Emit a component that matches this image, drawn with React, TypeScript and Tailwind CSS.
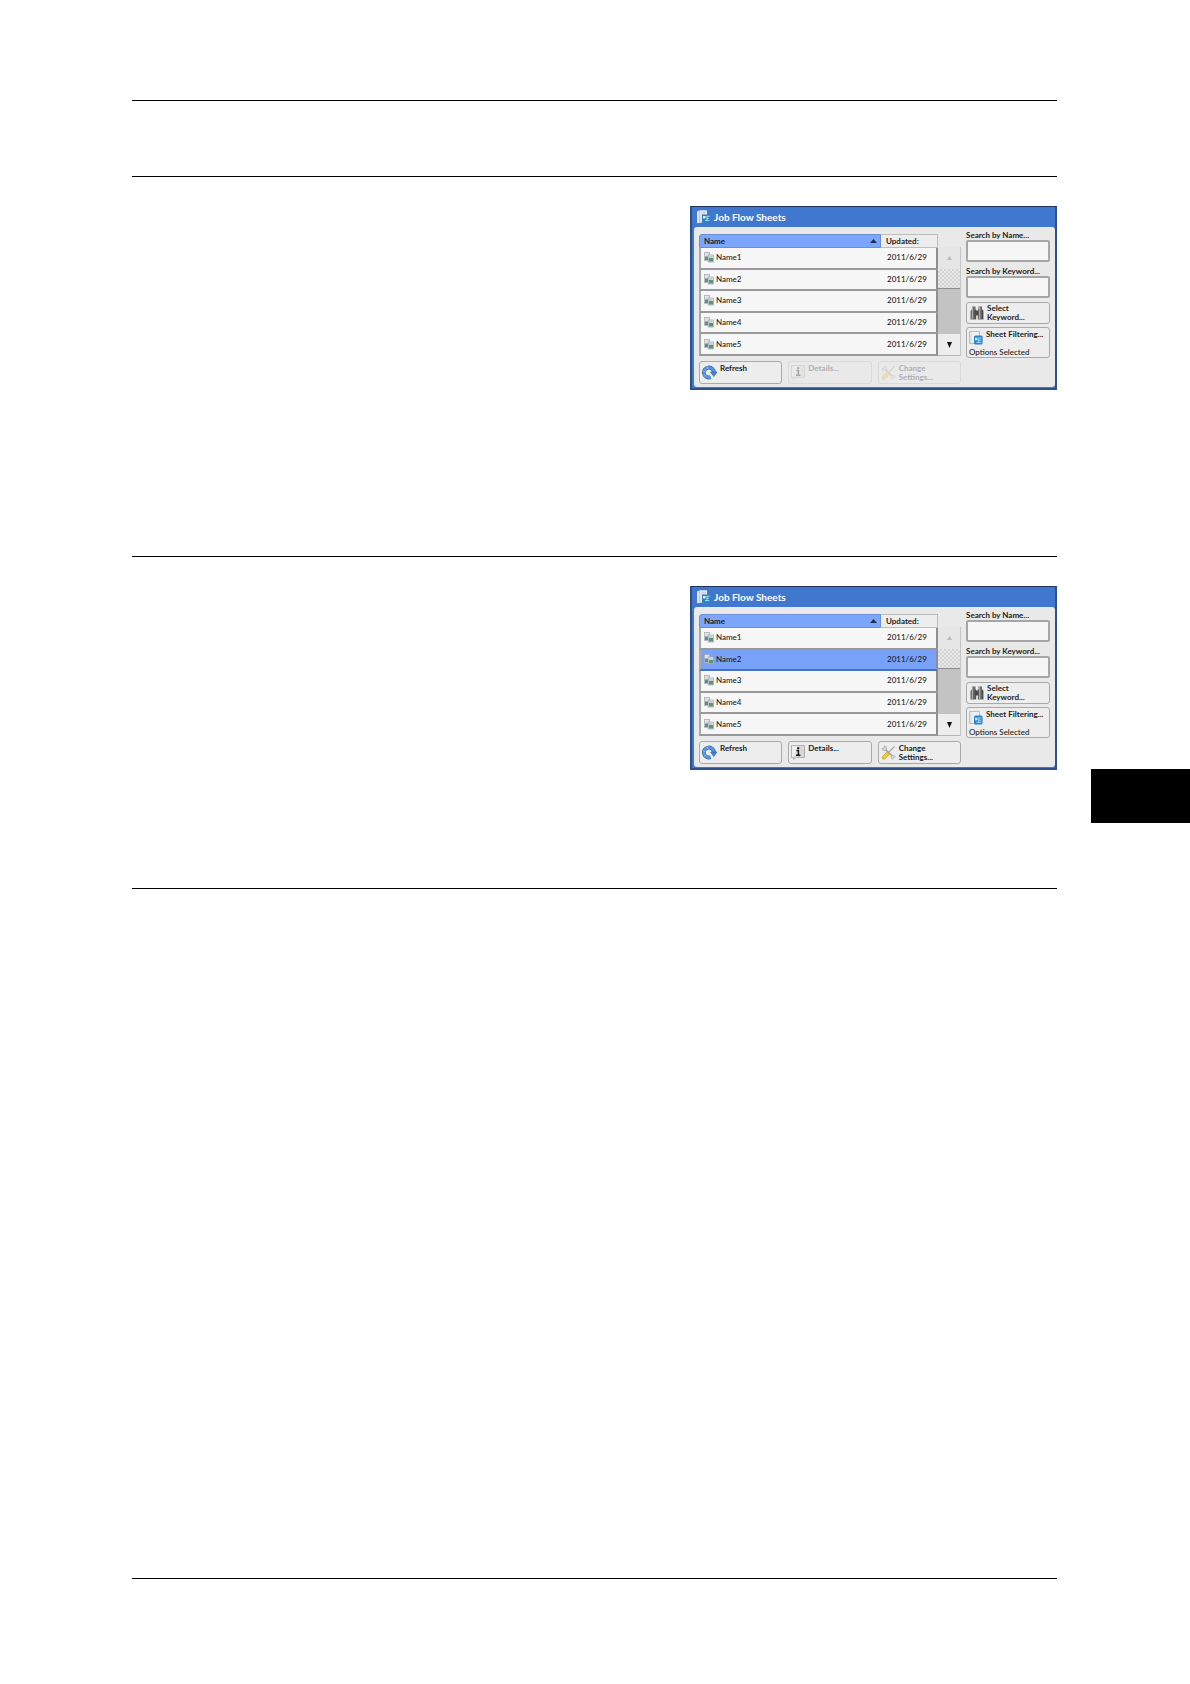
import React from 'react';
import clsx from 'clsx';

const NAMES = ['Name1', 'Name2', 'Name3', 'Name4', 'Name5'];

const TitleIcon = () => (
  <svg width="14" height="14" viewBox="0 0 14 14" aria-hidden="true">
    <path d="M0 1.5 3 0.3H10V12L0 13.2Z" fill="#e1e5ec" />
    <path d="M2.6 1V12.5" stroke="#b3bccb" strokeWidth="0.8" />
    <path d="M4.5 2.5H9M4.5 4.2H8" stroke="#c2cad8" strokeWidth="0.7" />
    <path d="M5 4.5H13.5V11.5L12 12.8H5Z" fill="#2381c4" />
    <path d="M6 6H8.6V8.4H6Z" fill="#e8f7ff" />
    <path d="M9.8 6.2H12.8M9.8 8.4H12M8 10.6H12.4M10 6V11" stroke="#c2e8fb" strokeWidth="0.8" />
  </svg>
);

const FlowIcon = () => (
  <svg className="block" width="10" height="11" viewBox="0 0 10 11" aria-hidden="true">
    <rect x="0.5" y="0.5" width="5" height="8" fill="#dfe2e4" stroke="#a5a9ad" strokeWidth="0.7" />
    <rect x="1" y="4.5" width="3.2" height="3.5" fill="#5c8f80" />
    <rect x="4.2" y="3" width="5.3" height="7" fill="#e9ebed" stroke="#999ea2" strokeWidth="0.7" />
    <rect x="5" y="6" width="4" height="3.5" fill="#5b9479" />
    <path d="M5 5H8.5" stroke="#87a6bb" strokeWidth="0.8" />
  </svg>
);

const RefreshIcon = () => (
  <svg width="15" height="15" viewBox="0 0 15 15" aria-hidden="true">
    <path d="M8.6 12.2A5 5 0 1 1 11.9 7.4" fill="none" stroke="#2c62a8" strokeWidth="3.8" />
    <path d="M8.4 12.2A5 5 0 1 1 11.9 7.4" fill="none" stroke="#5a97dc" strokeWidth="2.6" />
    <path d="M8.6 7H15L11.8 11.6Z" fill="#4482cc" stroke="#2c62a8" strokeWidth="0.6" />
    <path d="M2.4 11.8 4.4 9.4M0.8 5.8 3.6 6.8M5 1.4 5.8 4" stroke="#b4d4f5" strokeWidth="0.6" />
  </svg>
);

const InfoIcon = () => (
  <svg width="14" height="15" viewBox="0 0 14 15" aria-hidden="true">
    <path d="M0.5 0.5H13.5V12.5H5L2.6 14.4V12.5H0.5Z" fill="#d7d7d7" stroke="#a3a3a3" strokeWidth="0.8" />
    <path d="M1 1H8L3 12H1Z" fill="#efefef" />
    <path d="M5.4 5.5H7.4V10M5 10.3H9.4" fill="none" stroke="#111" strokeWidth="1.4" />
    <rect x="6.2" y="2.2" width="2" height="1.8" fill="#111" />
  </svg>
);

const ToolsIcon = () => (
  <svg width="15" height="15" viewBox="0 0 15 15" aria-hidden="true">
    <path d="M3.5 3.5 12.5 12.5" stroke="#a2a4a8" strokeWidth="1.6" />
    <path d="M3.6 0.8A2.4 2.4 0 1 1 0.8 3.4L2.8 3.6Z" fill="#d8dadd" stroke="#a2a4a8" strokeWidth="0.7" />
    <path d="M11.6 14.2A2 2 0 1 1 14.2 11.8L12.8 12.4Z" fill="#d8dadd" stroke="#a2a4a8" strokeWidth="0.7" />
    <path d="M7 8 13.6 1.4" stroke="#a2a4a8" strokeWidth="1.1" />
    <path d="M1 12 6 6.8 8.6 9.2 3.6 14.2Q1.2 14.8 1 12Z" fill="#f3c92d" stroke="#bd981f" strokeWidth="0.6" />
  </svg>
);

const BinocularsIcon = () => (
  <svg width="14" height="14" viewBox="0 0 14 14" aria-hidden="true">
    <path d="M2 0.5H5.5V3L6.2 4V13.5H0.5V5L2 3ZM8.5 0.5H12V3L13.5 5V13.5H7.8V4L8.5 3Z" fill="#6b6b6b" />
    <path d="M5.5 4.5H8.5V9.5H5.5Z" fill="#4a4a4a" />
    <path d="M2.4 1V13M9.6 1V13" stroke="#adadad" strokeWidth="1.1" />
    <path d="M5 4V13M12.4 4V13" stroke="#3f3f3f" strokeWidth="0.9" />
  </svg>
);

const FilterIcon = () => (
  <svg width="14" height="14" viewBox="0 0 14 14" aria-hidden="true">
    <path d="M0.5 0.5H10.5V12.5H0.5Z" fill="#edf1f5" stroke="#a9b0b8" strokeWidth="0.8" />
    <path d="M2 1V12" stroke="#c3cad3" strokeWidth="0.7" />
    <rect x="5" y="4.5" width="8.6" height="9" rx="1.6" fill="#2884cb" />
    <path d="M6 6.6H8.6V9.4H6Z" fill="#b4e2f8" />
    <path d="M9.8 7H12.6M9.8 9.2H12.4M7.4 11.4H12.4M9.8 6.6V11.4" stroke="#c4e9fb" strokeWidth="0.8" />
  </svg>
);

const PanelButton = ({
  icon,
  children,
  disabled,
}: {
  icon: React.ReactNode;
  children: React.ReactNode;
  disabled?: boolean;
}) => (
  <button
    type="button"
    disabled={disabled}
    className={clsx(
      'flex h-[23px] flex-1 items-start gap-[3px] rounded-[3px] border pl-[2px] pt-[2px] text-left font-bold leading-[9px]',
      disabled ? 'border-[#dadada] bg-[#e9e9e9] text-[#b0b0b0]' : 'border-[#a9a9a9] bg-[#ededed] text-[#1c1c1c]',
    )}
  >
    <span className={clsx('shrink-0 pt-px', disabled && 'opacity-30')}>{icon}</span>
    <span>{children}</span>
  </button>
);

const SearchField = ({ id, label }: { id: string; label: string }) => (
  <div className="flex flex-col">
    <label htmlFor={id} className="h-[13px] whitespace-nowrap font-bold leading-[16px]">{label}</label>
    <input id={id} type="text" className="h-[22px] w-full rounded-[2px] border-2 border-[#a6a6a6] bg-[#f6f6f6] px-1" />
  </div>
);

const ScrollBar = () => (
  <div className="mt-[13px] flex w-[23px] flex-col border-r border-[#c4c4c4] bg-[#c3c3c3]">
    <button type="button" aria-label="Scroll up" className="flex h-[22px] items-center justify-center bg-[#e6e6e6]">
      <svg width="5" height="4" viewBox="0 0 5 4" aria-hidden="true"><path d="M2.5 0 5 4H0Z" fill="#b9b9b9" /></svg>
    </button>
    <div className="h-[20px] border-b border-[#8c8c8c] bg-[repeating-conic-gradient(#d3d3d3_0_25%,#e9e9e9_0_50%)] bg-size-[4px_4px]" />
    <div className="flex-1" />
    <button type="button" aria-label="Scroll down" className="flex h-[22px] items-center justify-center border-b border-[#b5b5b5] bg-[#ededed]">
      <svg width="5" height="6" viewBox="0 0 5 6" aria-hidden="true"><path d="M0 0H5L2.5 6Z" fill="#111" /></svg>
    </button>
  </div>
);

const SheetTable = ({ selected }: { selected?: string }) => (
  <table className="h-[122px] flex-1 border-separate border-spacing-0">
    <thead>
      <tr className="h-[14px] text-left leading-[11px]">
        <th className="rounded-tl-[3px] border border-[#6a8fd6] bg-[#7ba6fb] py-0 pl-[4px] pr-[3px] font-bold">
          <span className="flex items-center justify-between">
            Name
            <svg width="7" height="4" viewBox="0 0 7 4" aria-hidden="true"><path d="M3.5 0 7 4H0Z" fill="#1d2f55" /></svg>
          </span>
        </th>
        <th className="w-[57px] border border-l-0 border-[#bdbdbd] bg-[#ededed] px-[5px] py-0 font-bold">Updated:</th>
      </tr>
    </thead>
    <tbody>
      {NAMES.map((name) => {
        const isSelected = name === selected;
        const tone = isSelected ? 'bg-[#78a2fa] border-b-[#4a70c0]' : 'bg-[#f7f7f7] border-b-[#999999]';
        return (
          <tr key={name} className="font-medium leading-[11px]">
            <td className={clsx('border-b-2 border-l-2 border-l-[#a8a8a8] py-0 pl-[3px]', tone)}>
              <span className="flex items-center gap-[2px]">
                <FlowIcon />
                {name}
              </span>
            </td>
            <td className={clsx('border-b-2 border-r-2 border-r-[#8f8f8f] py-0 pl-[6px] text-left', tone)}>2011/6/29</td>
          </tr>
        );
      })}
    </tbody>
  </table>
);

const JobFlowPanel = ({ id, selected }: { id: string; selected?: string }) => (
  <section className="w-[367px] border-2 border-t border-[#2f4f8c] border-t-[#1f3358] bg-[#4178cf] pb-px pl-[2px] text-[8px] text-[#1c1c1c]">
    <h2 className="flex h-[20px] items-center gap-[3px] pl-[3px] text-[10px] font-bold leading-[20px] text-white">
      <TitleIcon />
      Job Flow Sheets
    </h2>
    <div className="flex h-[160px] gap-[5px] rounded-[3px] bg-[#e9e9e9] pl-[5px] pr-[5px]">
      <div className="flex flex-1 flex-col gap-[5px] pt-[7px]">
        <div className="flex">
          <SheetTable selected={selected} />
          <ScrollBar />
        </div>
        <div className="flex gap-[6px]">
          <PanelButton icon={<RefreshIcon />}>Refresh</PanelButton>
          <PanelButton icon={<InfoIcon />} disabled={!selected}>Details...</PanelButton>
          <PanelButton icon={<ToolsIcon />} disabled={!selected}>
            Change
            <br />
            Settings...
          </PanelButton>
        </div>
      </div>
      <div className="flex w-[84px] flex-col gap-px">
        <SearchField id={`${id}-name`} label="Search by Name..." />
        <SearchField id={`${id}-keyword`} label="Search by Keyword..." />
        <button type="button" className="mt-[3px] flex h-[22px] items-start gap-[3px] rounded-[3px] border border-[#a9a9a9] bg-[#ededed] pl-[3px] pt-px text-left font-bold leading-[9px]">
          <span className="shrink-0 pt-[2px]"><BinocularsIcon /></span>
          <span>
            Select
            <br />
            Keyword...
          </span>
        </button>
        <button type="button" className="mt-[2px] flex h-[31px] flex-col justify-between rounded-[3px] border border-[#a9a9a9] bg-[#ededed] pl-[2px] text-left leading-[9px]">
          <span className="flex gap-[3px] whitespace-nowrap pt-[2px] font-bold">
            <span className="h-[14px] shrink-0 pt-px"><FilterIcon /></span>
            Sheet Filtering...
          </span>
          <span className="font-medium">Options Selected</span>
        </button>
      </div>
    </div>
  </section>
);

export default function App() {
  return (
    <div className="relative flex min-h-screen flex-col bg-white pb-[105px] pl-[132px] pr-[133px] pt-[100px] font-['Lato','Noto_Sans',sans-serif]">
      <header className="h-[76px] border-t border-black" />
      <main className="flex flex-1 flex-col">
        <div className="flex h-[380px] justify-end border-t border-black pt-[29px]">
          <div><JobFlowPanel id="list" /></div>
        </div>
        <div className="flex h-[332px] justify-end border-t border-black pt-[29px]">
          <div><JobFlowPanel id="picked" selected="Name2" /></div>
        </div>
        <div className="flex-1 border-t border-black" />
      </main>
      <footer className="border-t border-black" />
      <div className="absolute right-0 top-[769px] h-[54px] w-[99px] bg-black" />
    </div>
  );
}
